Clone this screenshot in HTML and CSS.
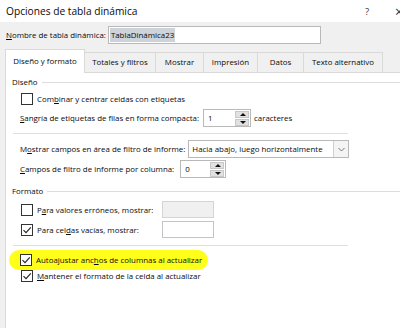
FILE: index.html
```html
<!DOCTYPE html>
<html>
<head>
  <title>Opciones de tabla dinámica</title>
  <link rel="stylesheet" href="styles.css">
</head>
<body>
  <div class="titlebar">
    <span class="title">Opciones de tabla dinámica</span>
    <span class="help">?</span>
    <span class="close">×</span>
  </div>

  <div class="namerow">
    <span class="label"><u>N</u>ombre de tabla dinámica:</span>
    <div class="namebox"><span class="sel">TablaDinámica23</span></div>
  </div>

  <div class="tabs">
    <div class="tab active">Diseño y formato</div>
    <div class="tab">Totales y filtros</div>
    <div class="tab">Mostrar</div>
    <div class="tab">Impresión</div>
    <div class="tab">Datos</div>
    <div class="tab">Texto alternativo</div>
  </div>

  <div class="panel">
    <div class="group">Diseño</div>

    <div class="row check-row first">
      <span class="box"></span>
      <span>Com<u>b</u>inar y centrar celdas con etiquetas</span>
    </div>

    <div class="row field-row">
      <span><u>S</u>angría de etiquetas de filas en forma compacta:</span>
      <div class="spin">
        <span class="val">1</span>
        <div class="arrows"><span class="up"></span><span class="down"></span></div>
      </div>
      <span class="after">caracteres</span>
    </div>

    <div class="sep"></div>

    <div class="row field-row combo-row">
      <span>M<u>o</u>strar campos en área de filtro de informe:</span>
      <div class="combo">
        <span class="val">Hacia abajo, luego horizontalmente</span>
        <span class="drop">
          <svg width="7" height="5" viewBox="0 0 7 5"><polyline points="0.5,1 3.5,4 6.5,1" fill="none" stroke="#777" stroke-width="1"/></svg>
        </span>
      </div>
    </div>

    <div class="row field-row cols-row">
      <span><u>C</u>ampos de filtro de informe por columna:</span>
      <div class="spin small">
        <span class="val">0</span>
        <div class="arrows"><span class="up"></span><span class="down"></span></div>
      </div>
    </div>

    <div class="group second">Formato</div>

    <div class="row check-row input-row">
      <span class="box"></span>
      <span class="lbl">P<u>a</u>ra valores erróneos, mostrar:</span>
      <span class="textbox disabled"></span>
    </div>

    <div class="row check-row input-row">
      <span class="box checked">
        <svg width="12" height="12" viewBox="0 0 12 12"><polyline points="2.5,6.2 5,8.7 9.8,3.3" fill="none" stroke="#222" stroke-width="1.1"/></svg>
      </span>
      <span class="lbl">Para cel<u>d</u>as vacías, mostrar:</span>
      <span class="textbox"></span>
    </div>

    <div class="sep short"></div>

    <div class="row check-row highlight">
      <span class="box checked">
        <svg width="12" height="12" viewBox="0 0 12 12"><polyline points="2.5,6.2 5,8.7 9.8,3.3" fill="none" stroke="#222" stroke-width="1.1"/></svg>
      </span>
      <span>Autoajustar anc<u>h</u>os de columnas al actualizar</span>
    </div>

    <div class="row check-row last">
      <span class="box checked">
        <svg width="12" height="12" viewBox="0 0 12 12"><polyline points="2.5,6.2 5,8.7 9.8,3.3" fill="none" stroke="#222" stroke-width="1.1"/></svg>
      </span>
      <span><u>M</u>antener el formato de la celda al actualizar</span>
    </div>
  </div>
</body>
</html>
```

FILE: styles.css
```css
body {
  margin: 0;
  width: 400px;
  height: 328px;
  overflow: hidden;
  background: #f0f0f0;
  color: #0a0a0a;
  font-family: 'Open Sans', 'Noto Sans', sans-serif;
  font-size: 7.9px;
  white-space: nowrap;
  display: flex;
  flex-direction: column;
}

u {
  text-decoration-thickness: 1px;
  text-underline-offset: 1px;
}

.titlebar {
  height: 22px;
  flex: none;
  background: #ffffff;
  display: flex;
  align-items: center;
  padding-left: 6px;
  font-size: 10.2px;
}

.title {
  flex: 1;
}

.help {
  color: #333;
  font-size: 9.5px;
  margin-right: 26px;
}

.close {
  color: #333;
  font-size: 14px;
  width: 5px;
  overflow: hidden;
}

.namerow {
  display: flex;
  align-items: center;
  height: 18px;
  margin-top: 4px;
  padding-left: 6px;
  flex: none;
}

.namebox {
  margin-left: 2px;
  width: 210px;
  height: 16px;
  background: #fff;
  border: 1px solid #b9b9b9;
  display: flex;
  align-items: center;
  padding-left: 1px;
}

.sel {
  background: #cdd3d9;
  padding: 1px 1px;
  line-height: 12px;
}

.tabs {
  display: flex;
  align-items: flex-end;
  margin-top: 5px;
  margin-left: 5px;
  height: 23px;
  flex: none;
}

.tab {
  height: 19px;
  line-height: 19px;
  border: 1px solid #d9d9d9;
  border-bottom: none;
  border-left: none;
  text-align: center;
}

.tab:nth-child(2) { width: 70px; }
.tab:nth-child(3) { width: 47px; }
.tab:nth-child(4) { width: 53px; }
.tab:nth-child(5) { width: 45px; }
.tab:nth-child(6) { width: 78px; }

.tab.active {
  width: 78px;
  height: 23px;
  line-height: 22px;
  background: #fff;
  border-left: 1px solid #d9d9d9;
  position: relative;
  top: 1px;
}

.panel {
  flex: 1;
  background: #fff;
  border-top: 1px solid #d9d9d9;
  border-left: 1px solid #d9d9d9;
  margin-left: 5px;
  padding: 2px 0 0 6px;
}

.group {
  display: flex;
  align-items: center;
  height: 14px;
}

.group::after {
  content: "";
  flex: 1;
  margin-left: 4px;
  border-top: 1px solid #dcdcdc;
}

.group.second {
  margin-top: 6px;
}

.row {
  display: flex;
  align-items: center;
  padding-left: 9px;
}

.check-row {
  height: 16px;
}

.check-row.first {
  margin-top: 2px;
}

.box {
  width: 10px;
  height: 10px;
  border: 1px solid #333;
  background: #fff;
  margin-right: 4px;
  position: relative;
  flex: none;
}

.box svg {
  position: absolute;
  left: -1px;
  top: -1px;
}

.field-row {
  height: 18px;
  margin-top: 2px;
  padding-left: 8px;
}

.spin {
  margin-left: 4px;
  width: 46px;
  height: 16px;
  border: 1px solid #b9b9b9;
  background: #fff;
  display: flex;
  align-items: center;
  justify-content: space-between;
}

.spin.small {
  width: 44px;
  margin-left: 6px;
}

.spin .val {
  padding-left: 4px;
}

.arrows {
  width: 14px;
  height: 15px;
  margin-right: 1px;
  display: flex;
  flex-direction: column;
  gap: 1px;
}

.arrows span {
  flex: 1;
  background: #e1e1e1;
  border: 1px solid #c8c8c8;
  position: relative;
}

.arrows span::after {
  content: "";
  position: absolute;
  left: 4px;
  top: 1px;
  border-left: 3px solid transparent;
  border-right: 3px solid transparent;
}

.arrows .up::after {
  border-bottom: 3px solid #111;
}

.arrows .down::after {
  border-top: 3px solid #111;
}

.after {
  margin-left: 3px;
}

.sep {
  height: 1px;
  width: 335px;
  background: #dedede;
  margin: 6px 0 6px 1px;
}

.sep.short {
  margin: 7px 0 4px 1px;
}

.combo-row {
  margin-top: 1px;
}

.combo {
  margin-left: 3px;
  width: 156px;
  height: 16px;
  border: 1px solid #b9b9b9;
  background: #fff;
  display: flex;
  align-items: center;
  padding-left: 3px;
}

.combo .val {
  flex: 1;
}

.drop {
  width: 14px;
  height: 16px;
  border-left: 1px solid #d0d0d0;
  background: #f4f4f4;
  display: flex;
  align-items: center;
  justify-content: center;
}

.input-row {
  height: 17px;
  margin-top: 3px;
}

.input-row .lbl {
  width: 125px;
}

.textbox {
  width: 50px;
  height: 15px;
  border: 1px solid #c4c4c4;
  background: #fff;
}

.textbox.disabled {
  background: #f0f0f0;
  border-color: #d4d4d4;
}

.highlight {
  width: fit-content;
  background: #ffff1a;
  border-radius: 10px;
  height: 20px;
  margin-left: -3px;
  padding: 0 6px 0 11px;
}

.check-row.last {
  margin-top: -2px;
}
```
